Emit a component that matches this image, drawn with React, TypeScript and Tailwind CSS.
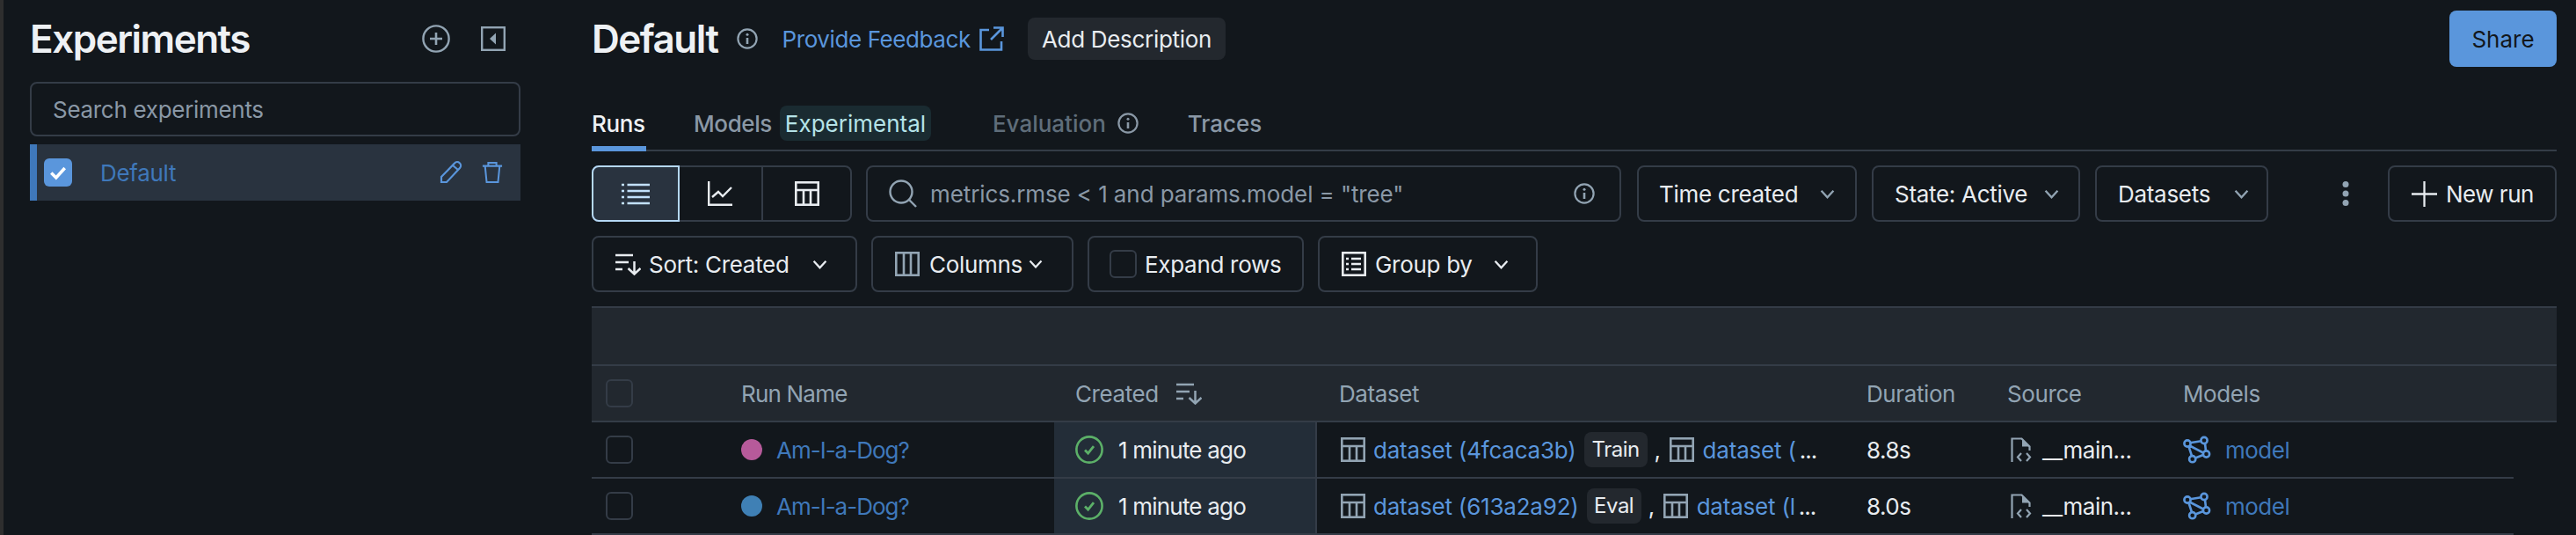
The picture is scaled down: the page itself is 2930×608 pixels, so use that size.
import React from "react";

const S = "none";
type P = { className?: string };

const Info = ({ className }: P) => (
  <svg viewBox="0 0 24 24" fill={S} stroke="currentColor" strokeWidth="2.2" className={className}>
    <circle cx="12" cy="12" r="10.6" />
    <path d="M12 11v7" strokeWidth="2.6" />
    <circle cx="12" cy="7.2" r="1.5" fill="currentColor" stroke="none" />
  </svg>
);
const Chevron = ({ className }: P) => (
  <svg viewBox="0 0 16 10" fill={S} stroke="currentColor" strokeWidth="2.2" className={className}>
    <path d="M1.5 1.5 8 8.5l6.5-7" />
  </svg>
);
const TableIcon = ({ className }: P) => (
  <svg viewBox="0 0 28 28" fill={S} stroke="currentColor" strokeWidth="2.6" className={className}>
    <rect x="1.3" y="1.3" width="25.4" height="25.4" />
    <path d="M1.3 10h25.4M10 10v16.7M18 10v16.7" />
  </svg>
);
const SortIcon = ({ className }: P) => (
  <svg viewBox="0 0 29 25" fill={S} stroke="currentColor" strokeWidth="2.5" className={className}>
    <path d="M0 2h20M0 10h15M0 18h8M21.5 9v14.5M14.5 17l7 6.5 7-6.5" />
  </svg>
);
const Check = ({ className }: P) => (
  <svg viewBox="0 0 32 32" fill={S} stroke="currentColor" strokeWidth="2.6" className={className}>
    <circle cx="16" cy="16" r="14.6" />
    <path d="m11 16.5 3.6 3.6 6.4-8" strokeWidth="2.8" />
  </svg>
);
const FileCode = ({ className }: P) => (
  <svg viewBox="0 0 24 28" fill={S} stroke="currentColor" strokeWidth="2.2" className={className}>
    <path d="M1.5 28V1.5h11l9 9V15" />
    <path d="M13 2v8.5h8.5z" fill="currentColor" stroke="none" />
    <path d="M12 18l-4 4.5 4 4.5M18 18l4 4.5-4 4.5" />
  </svg>
);
const ModelIcon = ({ className }: P) => (
  <svg viewBox="0 0 32 32" fill={S} stroke="currentColor" strokeWidth="2.6" className={className}>
    <path d="M8 8.2 20.5 6.2M25 9l1 8.5M7.5 11.5l15.5 8M6.5 12.5l3.5 10.5M14 25.5l9-3.500" />
    <circle cx="24" cy="5.5" r="3.6" />
    <circle cx="5" cy="9" r="3.6" />
    <circle cx="26.5" cy="21" r="3.6" />
    <circle cx="10.7" cy="26.7" r="3.6" />
  </svg>
);

const Btn = ({ w, children, className = "" }: { w: string; children: React.ReactNode; className?: string }) => (
  <div className={`${w} h-[64px] shrink-0 flex items-center border-2 border-[#343c47] rounded-[8px] ${className}`}>{children}</div>
);

const Cb = () => <div className="w-[31px] h-[32px] border-2 border-[#343c47] rounded-[6px] shrink-0" />;

const Row = ({ color, ds, tag, tagW, ds2, dur }: { color: string; ds: string; tag: string; tagW: string; ds2: string; dur: string }) => (
  <div className="w-[2186px] h-[64px] flex border-b-2 border-[#343c47] text-[26px] tracking-[-0.5px]">
    <div className="w-[170px] flex items-center pl-[16px] shrink-0"><Cb /></div>
    <div className="w-[356px] flex items-center shrink-0">
      <span className={`w-[24px] h-[24px] rounded-full ${color}`} />
      <span className="ml-[16px] text-[#3f78ba] tracking-[-1px]">Am-I-a-Dog?</span>
    </div>
    <div className="w-[299px] flex items-center pl-[24px] bg-[#232d38] border-r-2 border-[#343c47] shrink-0 text-[#e8ecf0]">
      <Check className="w-[32px] h-[32px] text-[#5cb068]" />
      <span className="ml-[17px] tracking-[-0.8px]">1 minute ago</span>
    </div>
    <div className="w-[625px] flex items-center pl-[27px] shrink-0">
      <TableIcon className="w-[28px] h-[28px] text-[#92a4b3]" />
      <span className="ml-[9px] text-[#5a96dc] whitespace-nowrap tracking-[-0.2px]">{ds}</span>
      <span className={`ml-[9px] ${tagW} h-[40px] flex items-center justify-center rounded-[8px] bg-[#23282e] text-[#e8ecf0] text-[24px]`}>{tag}</span>
      <span className="ml-[8px] text-[#e8ecf0]">,</span>
      <TableIcon className="ml-[10px] w-[28px] h-[28px] text-[#92a4b3]" />
      <span className="ml-[10px] text-[#5a96dc] whitespace-nowrap tracking-[-0.2px]">{ds2}</span>
      <span className="ml-[4px] text-[#e8ecf0] tracking-[-1px]">...</span>
    </div>
    <div className="w-[160px] flex items-center shrink-0 text-[#e8ecf0]">{dur}</div>
    <div className="w-[200px] flex items-center pl-[4px] shrink-0 text-[#e8ecf0]">
      <FileCode className="w-[24px] h-[28px] text-[#92a4b3]" />
      <span className="ml-[12px]">__main...</span>
    </div>
    <div className="flex items-center">
      <ModelIcon className="w-[32px] h-[32px] text-[#5a96dc]" />
      <span className="ml-[16px] text-[#3f78ba]">model</span>
    </div>
  </div>
);

export default function App() {
  return (
    <div className="w-[2930px] h-[608px] overflow-hidden flex bg-[#12171c] [font-family:Inter,sans-serif] text-[26px] text-[#e8ecf0]">
      <div className="w-[4px] shrink-0 bg-[#2e2e2e]" />
      <aside className="w-[669px] shrink-0 pl-[30px]">
        <div className="w-[558px] h-[88px] flex items-center">
          <h1 className="text-[44px] font-semibold tracking-[-1.5px] text-[#eef1f4] flex-1 leading-none">Experiments</h1>
          <svg viewBox="0 0 32 32" fill="none" stroke="#92a4b3" strokeWidth="2.4" className="w-[32px] h-[32px] mr-[35px]">
            <circle cx="16" cy="16" r="14.6" />
            <path d="M16 9v14M9 16h14" strokeWidth="2.6" />
          </svg>
          <svg viewBox="0 0 28 28" className="w-[28px] h-[28px] mr-[17px]">
            <rect x="1.2" y="1.2" width="25.6" height="25.6" fill="none" stroke="#92a4b3" strokeWidth="2.4" />
            <path d="M17 7.5v13l-7-6.5z" fill="#92a4b3" />
          </svg>
        </div>
        <div className="mt-[5px] w-[558px] h-[62px] flex items-center border-2 border-[#343c47] rounded-[8px] pl-[24px] text-[#8a98a6] tracking-[-0.3px]">Search experiments</div>
        <div className="mt-[9px] w-[558px] h-[64px] flex items-center bg-[#29333f] border-l-[8px] border-[#3f78ba]">
          <div className="ml-[8px] w-[32px] h-[32px] rounded-[6px] bg-[#5a96dc] flex items-center justify-center">
            <svg viewBox="0 0 20 20" fill="none" stroke="#fff" strokeWidth="3.2" className="w-[22px] h-[22px]"><path d="m3 10.5 5 5 9-10" /></svg>
          </div>
          <span className="ml-[32px] text-[#3f78ba] flex-1 tracking-[-0.3px]">Default</span>
          <svg viewBox="0 0 26 26" fill="none" stroke="#5a96dc" strokeWidth="2.2" className="w-[26px] h-[26px] mr-[22px]">
            <path d="M2 24v-6L17 2.5a3 3 0 0 1 6 5.5L8 24z" />
            <path d="m15 5 6 5" />
          </svg>
          <svg viewBox="0 0 26 28" fill="none" stroke="#5a96dc" strokeWidth="2.2" className="w-[24px] h-[26px] mr-[20px]">
            <path d="M1 6h24M8 6V2h10v4M4 6l2 20h14l2-20" />
          </svg>
        </div>
      </aside>

      <main className="w-[2235px] shrink-0 pt-[12px]">
        <div className="h-[64px] flex items-center">
          <h2 className="text-[44px] font-semibold tracking-[-1.5px] text-[#eef1f4] leading-none">Default</h2>
          <Info className="ml-[21px] w-[24px] h-[24px] text-[#92a4b3]" />
          <span className="ml-[28px] text-[#5a96dc] tracking-[-0.4px]">Provide Feedback</span>
          <svg viewBox="0 0 28 28" fill="none" stroke="#5a96dc" strokeWidth="2.6" className="ml-[10px] w-[28px] h-[28px]">
            <path d="M11 4H1.5v22.5H25V17M16 1.5h10.5V12M26 2 13 15" />
          </svg>
          <span className="ml-[27px] h-[48px] px-[16px] flex items-center rounded-[8px] bg-[#23282e] tracking-[-0.3px]">Add Description</span>
          <span className="ml-auto w-[122px] h-[64px] flex items-center justify-center rounded-[8px] bg-[#5a96dc] text-[#12171c]">Share</span>
        </div>

        <div className="mt-[44px] h-[52px] flex border-b-2 border-[#343c47] font-medium tracking-[-0.4px]">
          <div className="w-[62px] h-[52px] border-b-[6px] border-[#5a96dc] text-[#eef1f4] pt-[2px] leading-[38px]">Runs</div>
          <span className="ml-[54px] text-[#8a98a6] leading-[42px]">Models</span>
          <span className="ml-[9px] w-[172px] h-[40px] flex items-center justify-center rounded-[8px] bg-[#1a2b31] text-[#b5e3e8] font-normal tracking-normal">Experimental</span>
          <span className="ml-[70px] text-[#5f6d7a] leading-[42px] tracking-normal">Evaluation</span>
          <Info className="ml-[13px] mt-[8px] w-[24px] h-[24px] text-[#8a98a6]" />
          <span className="ml-[56px] text-[#8a98a6] leading-[42px] tracking-normal">Traces</span>
        </div>

        <div className="mt-[16px] h-[64px] flex tracking-[-0.3px]">
          <div className="w-[296px] h-[64px] shrink-0 flex border-2 border-[#343c47] rounded-[8px]">
            <div className="w-[100px] -m-[2px] h-[64px] flex items-center justify-center bg-[#29333f] border-2 border-[#b5d8f5] rounded-l-[8px]">
              <svg viewBox="0 0 32 25" fill="none" stroke="#c2e0fb" strokeWidth="2.6" className="w-[32px] h-[25px]">
                <path d="M6.5 2H32M6.5 9H32M6.5 16H32M6.5 23H32" />
                <path d="M0 2h3M0 9h3M0 16h3M0 23h3" />
              </svg>
            </div>
            <div className="w-[97px] h-full flex items-center justify-center border-r-2 border-[#343c47]">
              <svg viewBox="0 0 28 28" fill="none" stroke="#e8ecf0" strokeWidth="2.4" className="w-[28px] h-[28px]">
                <path d="M1.2 0v26.8H28M5 18l7-6 5 5 10-10" />
              </svg>
            </div>
            <div className="flex-1 flex items-center justify-center">
              <TableIcon className="w-[28px] h-[28px] text-[#e8ecf0]" />
            </div>
          </div>
          <Btn w="w-[859px]" className="ml-[16px] pl-[24px] pr-[28px] text-[#8a98a6]">
            <svg viewBox="0 0 32 32" fill="none" stroke="#92a4b3" strokeWidth="2.4" className="w-[32px] h-[32px]">
              <circle cx="14" cy="14" r="12.5" />
              <path d="m23 23 8 8" />
            </svg>
            <span className="ml-[15px] flex-1 tracking-[-0.1px]">metrics.rmse &lt; 1 and params.model = "tree"</span>
            <Info className="w-[24px] h-[24px] text-[#92a4b3]" />
          </Btn>
          <Btn w="w-[250px]" className="ml-[18px] pl-[23px]">
            <span className="w-[183px]">Time created</span>
            <Chevron className="w-[17px] h-[11px] text-[#92a4b3]" />
          </Btn>
          <Btn w="w-[237px]" className="ml-[17px] pl-[24px]">
            <span className="w-[170px]">State: Active</span>
            <Chevron className="w-[17px] h-[11px] text-[#92a4b3]" />
          </Btn>
          <Btn w="w-[197px]" className="ml-[17px] pl-[24px]">
            <span className="w-[132px]">Datasets</span>
            <Chevron className="w-[17px] h-[11px] text-[#92a4b3]" />
          </Btn>
          <div className="w-[136px] flex items-center justify-center pl-[40px]">
            <svg viewBox="0 0 8 28" fill="#92a4b3" className="w-[8px] h-[28px]">
              <circle cx="4" cy="3.5" r="3.5" /><circle cx="4" cy="14" r="3.5" /><circle cx="4" cy="24.5" r="3.5" />
            </svg>
          </div>
          <Btn w="w-[192px]" className="pl-[25px] tracking-[-0.5px]">
            <svg viewBox="0 0 28 28" fill="none" stroke="#e8ecf0" strokeWidth="2.2" className="w-[29px] h-[29px]"><path d="M14 0v28M0 14h28" /></svg>
            <span className="ml-[10px]">New run</span>
          </Btn>
        </div>

        <div className="mt-[16px] h-[64px] flex tracking-[-0.3px]">
          <Btn w="w-[302px]" className="pl-[25px]">
            <SortIcon className="w-[29px] h-[25px] text-[#e8ecf0]" />
            <span className="ml-[9px] w-[186px]">Sort: Created</span>
            <Chevron className="w-[17px] h-[11px] text-[#e8ecf0]" />
          </Btn>
          <Btn w="w-[230px]" className="ml-[16px] pl-[25px]">
            <svg viewBox="0 0 28 28" fill="none" stroke="#92a4b3" strokeWidth="2.6" className="w-[28px] h-[28px]">
              <rect x="1.3" y="1.3" width="25.4" height="25.4" /><path d="M10 1v26M18 1v26" />
            </svg>
            <span className="ml-[11px] w-[113px]">Columns</span>
            <Chevron className="w-[16px] h-[10px] text-[#e8ecf0]" />
          </Btn>
          <Btn w="w-[246px]" className="ml-[16px] pl-[23px]">
            <Cb />
            <span className="ml-[9px]">Expand rows</span>
          </Btn>
          <Btn w="w-[250px]" className="ml-[16px] pl-[25px]">
            <svg viewBox="0 0 28 28" fill="none" stroke="#e8ecf0" strokeWidth="2.6" className="w-[28px] h-[28px]">
              <rect x="1.3" y="1.3" width="25.4" height="25.4" />
              <path d="M11 8h11M11 14h11M11 20h11M5 8h3M5 14h3M5 20h3" />
            </svg>
            <span className="ml-[10px] w-[135px]">Group by</span>
            <Chevron className="w-[17px] h-[11px] text-[#e8ecf0]" />
          </Btn>
        </div>

        <div className="mt-[16px] border-t-2 border-[#343c47] bg-[#22282f] h-[132px]">
          <div className="h-[66px] border-b-2 border-[#343c47]" />
          <div className="h-[64px] flex items-center border-b-2 border-[#343c47] text-[#92a4b3] tracking-[-0.4px]">
            <div className="w-[170px] pl-[16px] shrink-0"><Cb /></div>
            <div className="w-[380px] shrink-0 tracking-[-0.8px]">Run Name</div>
            <div className="w-[300px] shrink-0 flex items-center">
              Created
              <SortIcon className="ml-[20px] w-[29px] h-[25px] text-[#92a4b3]" />
            </div>
            <div className="w-[600px] shrink-0">Dataset</div>
            <div className="w-[160px] shrink-0">Duration</div>
            <div className="w-[200px] shrink-0">Source</div>
            <div>Models</div>
          </div>
        </div>
        <Row color="bg-[#b65a9a]" ds="dataset (4fcaca3b)" tag="Train" tagW="w-[72px]" ds2="dataset (" dur="8.8s" />
        <Row color="bg-[#3f80b5]" ds="dataset (613a2a92)" tag="Eval" tagW="w-[62px]" ds2="dataset (l" dur="8.0s" />
      </main>
    </div>
  );
}
